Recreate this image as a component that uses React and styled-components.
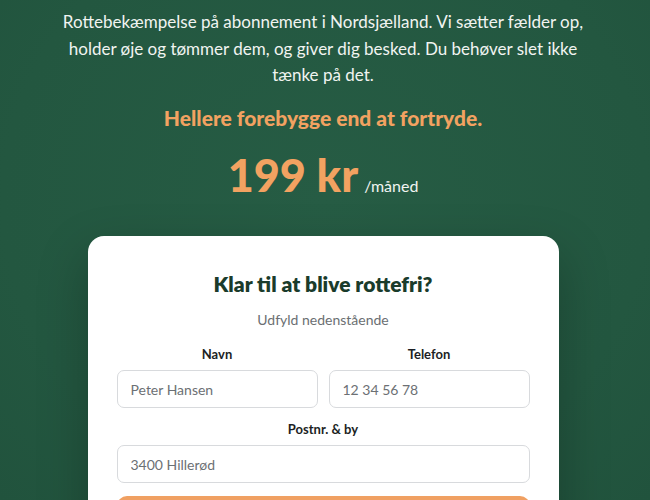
import React from 'react';
import styled, { createGlobalStyle } from 'styled-components';

const Global = createGlobalStyle`
  html, body {
    margin: 0;
    padding: 0;
    background: #245a42;
  }
  body {
    font-family: 'Lato', 'Noto Sans', sans-serif;
  }
  * { box-sizing: border-box; }
`;

const Hero = styled.section`
  height: 500px;
  background: radial-gradient(ellipse at 50% 40%, #265c44 0%, #235740 70%, #21533d 100%);
  display: flex;
  flex-direction: column;
  align-items: center;
  padding: 9px 22px 0 18px;
  overflow: hidden;
`;

const Lead = styled.p`
  margin: 0;
  max-width: 540px;
  text-align: center;
  color: #f1f4f1;
  font-size: 17px;
  line-height: 26.5px;
`;

const Tagline = styled.p`
  margin: 16px 0 0;
  color: #f2a261;
  font-size: 21px;
  font-weight: 900;
  text-align: center;
`;

const PriceRow = styled.div`
  margin-top: 21px;
  display: flex;
  align-items: baseline;
  gap: 6px;
`;

const Price = styled.span`
  color: #f2a261;
  font-size: 45px;
  font-weight: 900;
  line-height: 1.1;
`;

const Per = styled.span`
  color: #f1f4f1;
  font-size: 16px;
`;

const Card = styled.div`
  flex-shrink: 0;
  margin-top: 36px;
  width: 471px;
  background: #fff;
  border-radius: 16px;
  padding: 35px 29px 0;
  box-shadow: 0 20px 50px rgba(0, 0, 0, 0.25);
  display: flex;
  flex-direction: column;
`;

const Title = styled.h2`
  margin: 0;
  text-align: center;
  color: #1a3b2b;
  font-size: 21px;
  font-weight: 800;
`;

const Sub = styled.p`
  margin: 15px 0 0;
  text-align: center;
  color: #6b6f72;
  font-size: 14px;
`;

const Grid = styled.div`
  margin-top: 18px;
  display: grid;
  grid-template-columns: minmax(0, 1fr) minmax(0, 1fr);
  column-gap: 11px;
  row-gap: 13px;
`;

const Field = styled.label`
  display: flex;
  flex-direction: column;
  gap: 8px;
  min-width: 0;
  grid-column: ${p => (p.$wide ? '1 / -1' : 'auto')};
`;

const Label = styled.span`
  text-align: center;
  color: #1c1f24;
  font-size: 13px;
  font-weight: 700;
`;

const Input = styled.input`
  width: 100%;
  min-width: 0;
  height: 38px;
  border: 1px solid #d8dadd;
  border-radius: 7px;
  padding: 0 13px;
  font-family: inherit;
  font-size: 14px;
  color: #222;
  outline: none;
  &::placeholder { color: #6c7074; }
`;

const Submit = styled.button`
  margin-top: 13px;
  height: 44px;
  border: none;
  border-radius: 10px;
  background: #f0a062;
  cursor: pointer;
`;

export default function App() {
  return (
    <Hero>
      <Global />
      <Lead>
        Rottebekæmpelse på abonnement i Nordsjælland. Vi sætter fælder op, holder øje og tømmer dem, og giver dig besked. Du behøver slet ikke tænke på det.
      </Lead>
      <Tagline>Hellere forebygge end at fortryde.</Tagline>
      <PriceRow>
        <Price>199 kr</Price>
        <Per>/måned</Per>
      </PriceRow>
      <Card>
        <Title>Klar til at blive rottefri?</Title>
        <Sub>Udfyld nedenstående</Sub>
        <Grid>
          <Field>
            <Label>Navn</Label>
            <Input placeholder="Peter Hansen" />
          </Field>
          <Field>
            <Label>Telefon</Label>
            <Input placeholder="12 34 56 78" />
          </Field>
          <Field $wide>
            <Label>Postnr. &amp; by</Label>
            <Input placeholder="3400 Hillerød" />
          </Field>
        </Grid>
        <Submit type="button" aria-label="Send" />
      </Card>
    </Hero>
  );
}
